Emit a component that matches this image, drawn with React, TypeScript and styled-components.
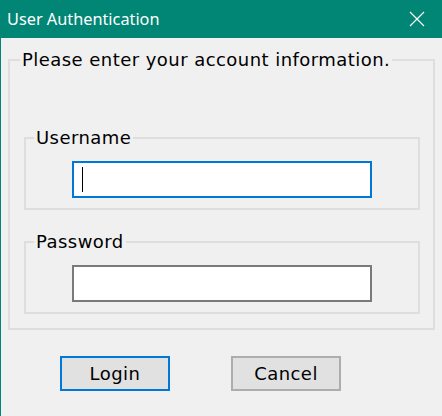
import React from "react";
import styled, { createGlobalStyle } from "styled-components";

const GlobalStyle = createGlobalStyle`
  html, body {
    margin: 0;
    padding: 0;
    background: #f0f0f0;
  }
  body {
    font-family: "DejaVu Sans", "Noto Sans", "Liberation Sans", sans-serif;
  }
`;

const Window = styled.div`
  width: 442px;
  height: 416px;
  box-sizing: border-box;
  border-left: 1px solid #018574;
  background: #f0f0f0;
  display: flex;
  flex-direction: column;
  overflow: hidden;
`;

const TitleBar = styled.div`
  height: 38px;
  flex: 0 0 38px;
  margin-left: -1px;
  background: #018574;
  color: #ffffff;
  display: flex;
  align-items: center;
  justify-content: space-between;
  padding: 0 17px 0 7px;
  font-family: "Noto Sans", "Liberation Sans", sans-serif;
  font-size: 16.3px;
`;

const Body = styled.div`
  padding: 10px 7px 0 7px;
  display: flex;
  flex-direction: column;
`;

const Group = styled.fieldset<{ $inner?: boolean }>`
  margin: 0;
  min-width: 0;
  border: 2px solid #dedede;
  padding: ${(p) => (p.$inner ? "11px 0 10px 46px" : "0 13px 14px 14px")};
  display: flex;
  flex-direction: column;
  gap: ${(p) => (p.$inner ? "0" : "20px")};
`;

const Legend = styled.legend<{ $offset: number }>`
  margin-left: ${(p) => p.$offset}px;
  padding: 0 2px;
  font-size: 18px;
  letter-spacing: 0.45px;
  line-height: 24px;
  color: #000;
`;

const Spacer = styled.div`
  height: 34px;
`;

const TextBox = styled.div<{ $focused?: boolean }>`
  width: 300px;
  height: 37px;
  box-sizing: border-box;
  background: #ffffff;
  border: 2px solid ${(p) => (p.$focused ? "#0078d7" : "#7a7a7a")};
  display: flex;
  align-items: center;
  padding-left: 8px;
`;

const Caret = styled.span`
  width: 1px;
  height: 25px;
  background: #000;
`;

const ButtonRow = styled.div`
  display: flex;
  gap: 61px;
  padding: 26px 0 0 52px;
`;

const Button = styled.button<{ $default?: boolean }>`
  width: 110px;
  height: 35px;
  box-sizing: border-box;
  background: #e1e1e1;
  border: 2px solid ${(p) => (p.$default ? "#0078d7" : "#adadad")};
  font-family: inherit;
  font-size: 18px;
  letter-spacing: 0.45px;
  color: #000;
  padding: 0;
`;

function CloseIcon() {
  return (
    <svg width="16" height="16" viewBox="0 0 16 16">
      <path d="M1 1 L15 15 M15 1 L1 15" stroke="#fff" strokeWidth="1.2" fill="none" />
    </svg>
  );
}

export default function App() {
  return (
    <Window>
      <GlobalStyle />
      <TitleBar>
        <span>User Authentication</span>
        <CloseIcon />
      </TitleBar>
      <Body>
        <Group>
          <Legend $offset={-4}>Please enter your account information.</Legend>
          <Spacer />
          <Group $inner>
            <Legend $offset={-38}>Username</Legend>
            <TextBox $focused>
              <Caret />
            </TextBox>
          </Group>
          <Group $inner>
            <Legend $offset={-38}>Password</Legend>
            <TextBox />
          </Group>
        </Group>
        <ButtonRow>
          <Button $default>Login</Button>
          <Button>Cancel</Button>
        </ButtonRow>
      </Body>
    </Window>
  );
}
